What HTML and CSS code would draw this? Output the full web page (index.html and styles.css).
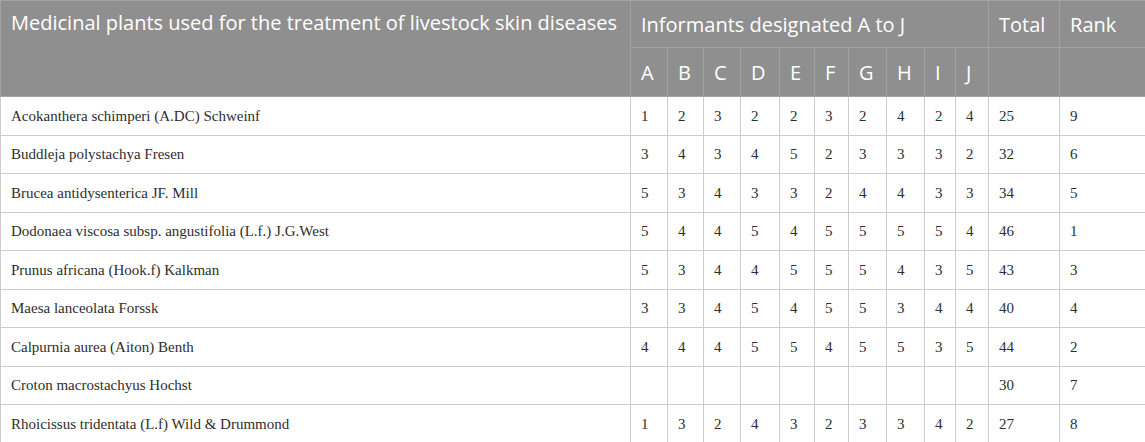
FILE: index.html
```html
<!DOCTYPE html>
<html>
<head>
<meta charset="utf-8">
<link rel="stylesheet" href="styles.css">
</head>
<body>
<table class="tbl">
  <colgroup>
    <col class="c-name">
    <col class="c-a"><col class="c-b"><col class="c-c"><col class="c-d"><col class="c-e">
    <col class="c-f"><col class="c-g"><col class="c-h"><col class="c-i"><col class="c-j">
    <col class="c-total"><col class="c-rank">
  </colgroup>
  <thead>
    <tr class="h1">
      <th rowspan="2" class="name-h">Medicinal plants used for the treatment of livestock skin diseases</th>
      <th colspan="10">Informants designated A to J</th>
      <th>Total</th>
      <th>Rank</th>
    </tr>
    <tr class="h2">
      <th>A</th><th>B</th><th>C</th><th>D</th><th>E</th><th>F</th><th>G</th><th>H</th><th>I</th><th>J</th>
      <th></th><th></th>
    </tr>
  </thead>
  <tbody>
    <tr><td>Acokanthera schimperi (A.DC) Schweinf</td><td>1</td><td>2</td><td>3</td><td>2</td><td>2</td><td>3</td><td>2</td><td>4</td><td>2</td><td>4</td><td>25</td><td>9</td></tr>
    <tr><td>Buddleja polystachya Fresen</td><td>3</td><td>4</td><td>3</td><td>4</td><td>5</td><td>2</td><td>3</td><td>3</td><td>3</td><td>2</td><td>32</td><td>6</td></tr>
    <tr><td>Brucea antidysenterica JF. Mill</td><td>5</td><td>3</td><td>4</td><td>3</td><td>3</td><td>2</td><td>4</td><td>4</td><td>3</td><td>3</td><td>34</td><td>5</td></tr>
    <tr><td>Dodonaea viscosa subsp. angustifolia (L.f.) J.G.West</td><td>5</td><td>4</td><td>4</td><td>5</td><td>4</td><td>5</td><td>5</td><td>5</td><td>5</td><td>4</td><td>46</td><td>1</td></tr>
    <tr><td>Prunus africana (Hook.f) Kalkman</td><td>5</td><td>3</td><td>4</td><td>4</td><td>5</td><td>5</td><td>5</td><td>4</td><td>3</td><td>5</td><td>43</td><td>3</td></tr>
    <tr><td>Maesa lanceolata Forssk</td><td>3</td><td>3</td><td>4</td><td>5</td><td>4</td><td>5</td><td>5</td><td>3</td><td>4</td><td>4</td><td>40</td><td>4</td></tr>
    <tr><td>Calpurnia aurea (Aiton) Benth</td><td>4</td><td>4</td><td>4</td><td>5</td><td>5</td><td>4</td><td>5</td><td>5</td><td>3</td><td>5</td><td>44</td><td>2</td></tr>
    <tr><td>Croton macrostachyus Hochst</td><td></td><td></td><td></td><td></td><td></td><td></td><td></td><td></td><td></td><td></td><td>30</td><td>7</td></tr>
    <tr><td>Rhoicissus tridentata (L.f) Wild &amp; Drummond</td><td>1</td><td>3</td><td>2</td><td>4</td><td>3</td><td>2</td><td>3</td><td>3</td><td>4</td><td>2</td><td>27</td><td>8</td></tr>
  </tbody>
</table>
</body>
</html>
```
FILE: styles.css
```css
html, body {
  margin: 0;
  padding: 0;
  background: #ffffff;
}

.tbl {
  width: 1145px;
  table-layout: fixed;
  border-collapse: collapse;
  border-spacing: 0;
}

.c-name { width: 630px; }
.c-a { width: 37px; }
.c-b { width: 36px; }
.c-c { width: 37px; }
.c-d { width: 39px; }
.c-e { width: 35px; }
.c-f { width: 34px; }
.c-g { width: 38px; }
.c-h { width: 38px; }
.c-i { width: 31px; }
.c-j { width: 33px; }
.c-total { width: 71px; }
.c-rank { width: 86px; }

.tbl th {
  background: #8f8f8f;
  color: #ffffff;
  font-family: "Open Sans", "Lato", sans-serif;
  font-weight: 400;
  font-size: 20px;
  line-height: 27px;
  text-align: left;
  padding: 0 10px;
  border: 1px solid #a2a2a2;
  white-space: nowrap;
  overflow: hidden;
}

.tbl .name-h {
  vertical-align: top;
  padding-top: 8px;
}

.tbl .h1 { height: 47px; }
.tbl .h2 { height: 49px; }

.tbl td {
  font-family: "Liberation Serif", "Times New Roman", serif;
  font-size: 15px;
  line-height: 18px;
  color: #2e2e2e;
  padding: 0 10px;
  border: 1px solid #cccccc;
  white-space: nowrap;
  overflow: hidden;
}

.tbl tbody tr { height: 38.5px; }
```
